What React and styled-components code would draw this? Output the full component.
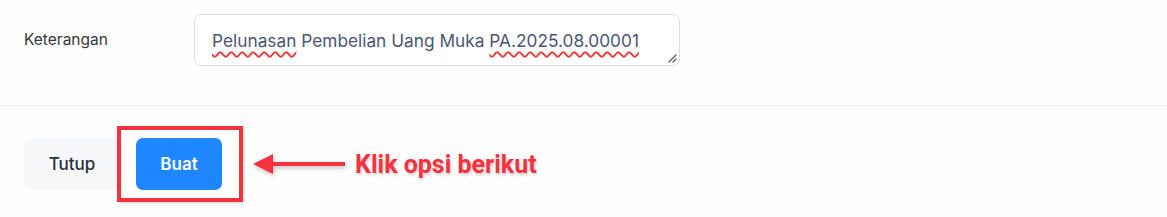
import React from "react";
import styled, { createGlobalStyle } from "styled-components";

const Global = createGlobalStyle`
  body {
    margin: 0;
    background: #fefefe;
    font-family: Inter, "Noto Sans", sans-serif;
  }
`;

const Page = styled.div`
  width: 1167px;
  height: 217px;
  overflow: hidden;
`;

const FormRow = styled.div`
  display: flex;
  align-items: flex-start;
  padding: 14px 0 0 24px;
  height: 106px;
  box-sizing: border-box;
  border-bottom: 1px solid #eeeff1;
`;

const Label = styled.div`
  width: 170px;
  font-size: 15.5px;
  color: #33363d;
  line-height: 52px;
`;

const TextBox = styled.div`
  position: relative;
  width: 486px;
  height: 52px;
  box-sizing: border-box;
  border: 1px solid #dcdfe8;
  border-radius: 7px;
  background: #fff;
  padding: 0 17px;
  font-size: 17.3px;
  line-height: 52px;
  color: #4b5576;
  white-space: nowrap;
`;

const Misspelled = styled.span`
  text-decoration: underline wavy #f03838;
  text-decoration-thickness: 1.5px;
  text-underline-offset: 4px;
  text-decoration-skip-ink: none;
`;

const Grip = styled.svg`
  position: absolute;
  right: 2px;
  bottom: 2px;
`;

const Footer = styled.div`
  display: flex;
  align-items: center;
  padding: 32px 0 0 24px;
  gap: 16px;
`;

const Button = styled.button`
  height: 52px;
  width: ${p => p.$w}px;
  border: none;
  border-radius: 7px;
  font-family: Inter, "Noto Sans", sans-serif;
  font-size: 17px;
  font-weight: ${p => (p.$primary ? 600 : 500)};
  background: ${p => (p.$primary ? "#1e86ff" : "#f6f7f9")};
  color: ${p => (p.$primary ? "#fff" : "#2a3040")};
  padding: 0;
`;

const Highlight = styled.div`
  position: absolute;
  left: -19px;
  top: -12px;
  width: 126px;
  height: 76px;
  box-sizing: border-box;
  border: 4px solid #f5323d;
  background: #fff;
  box-shadow: 1px 1px 3px rgba(0, 0, 0, 0.18);
  z-index: 0;
`;

const BuatWrap = styled.div`
  position: relative;
  & > button {
    position: relative;
    z-index: 1;
  }
`;

const Callout = styled.div`
  display: flex;
  align-items: center;
  margin: 1px 0 0 15px;
  gap: 8px;
`;

const CalloutText = styled.span`
  font-family: Roboto, "Liberation Sans", sans-serif;
  font-weight: 700;
  font-size: 25px;
  color: #f5323d;
  text-shadow: 1px 2px 3px rgba(0, 0, 0, 0.2);
`;

export default function App() {
  return (
    <Page>
      <Global />
      <FormRow>
        <Label>Keterangan</Label>
        <TextBox>
          <Misspelled>Pelunasan</Misspelled> Pembelian Uang Muka{" "}
          <Misspelled>PA.2025.08.00001</Misspelled>
          <Grip width="10" height="10" viewBox="0 0 10 10">
            <path d="M9 2 L2 9 M9 6 L6 9" stroke="#555" strokeWidth="1.2" strokeLinecap="round" />
          </Grip>
        </TextBox>
      </FormRow>
      <Footer>
        <Button $w={96}>Tutup</Button>
        <BuatWrap>
          <Highlight />
          <Button $primary $w={86}>Buat</Button>
        </BuatWrap>
        <Callout>
          <svg width="94" height="26" viewBox="0 0 94 26" style={{ filter: "drop-shadow(1px 2px 2px rgba(0,0,0,0.25))" }}>
            <path d="M0 12 L20 2 L20 10 L92 10 L92 14 L20 14 L20 22 Z" fill="#f5323d" />
          </svg>
          <CalloutText>Klik opsi berikut</CalloutText>
        </Callout>
      </Footer>
    </Page>
  );
}
